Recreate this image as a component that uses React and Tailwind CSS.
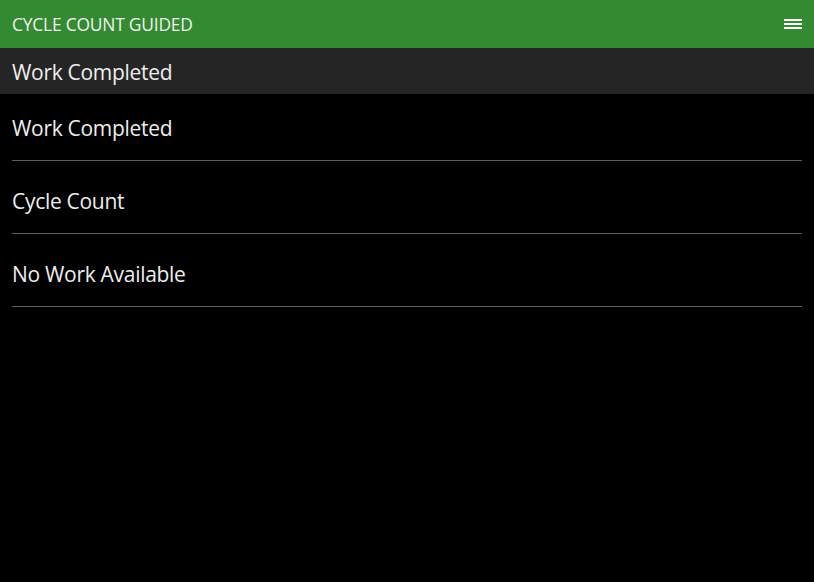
export default function App() {
  const rows = ["Work Completed", "Cycle Count", "No Work Available"];

  return (
    <div
      className="min-h-[582px] w-full bg-black text-white"
      style={{ fontFamily: '"Open Sans", "Noto Sans", sans-serif' }}
    >
      {/* Top bar */}
      <div className="flex h-[48px] items-center justify-between bg-[#338a30] pl-[12px] pr-[12px]">
        <span className="text-[17.4px] tracking-[-0.2px] text-[#f2f2f2]">CYCLE COUNT GUIDED</span>
        <div className="flex w-[18px] flex-col gap-[2.5px]">
          <span className="h-[1.5px] w-full bg-white" />
          <span className="h-[1.5px] w-full bg-white" />
          <span className="h-[1.5px] w-full bg-white" />
        </div>
      </div>

      {/* Sub header */}
      <div className="flex h-[46px] items-center bg-[#252525] px-[12px] pt-[3px]">
        <span className="text-[21px] tracking-[-0.3px] text-[#ededed]">Work Completed</span>
      </div>

      {/* Rows */}
      <div className="px-[12px]">
        {rows.map((r, i) => (
          <div
            key={r}
            className={
              "flex items-end border-b border-[#5e5e5e] pb-[19px] " + (i === 0 ? "h-[67px]" : "h-[73px]")
            }
          >
            <span className="text-[21px] leading-[26px] tracking-[-0.3px] text-[#ededed]">{r}</span>
          </div>
        ))}
      </div>
    </div>
  );
}
